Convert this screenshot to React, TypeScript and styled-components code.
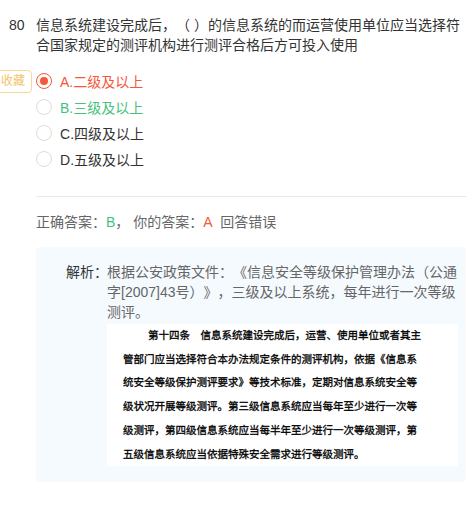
import styled, { createGlobalStyle } from 'styled-components';

const GlobalStyle = createGlobalStyle`
    body {
        margin: 0;
        background: #fff;
        font-family: "Liberation Sans", "Noto Sans CJK SC", sans-serif;
        color: #333;
        text-spacing-trim: space-all;
    }
`;

const Page = styled.div`
    width: 474px;
    padding: 15px 0 0 0;
    box-sizing: border-box;
`;

const Question = styled.div`
    display: flex;
    font-size: 14px;
    line-height: 20px;
    color: #333;
`;

const Num = styled.div`
    width: 36px;
    flex: none;
    padding-left: 9px;
    box-sizing: border-box;
`;

const Stem = styled.div`
    width: 430px;
`;

const Options = styled.div`
    position: relative;
    margin: 13px 0 0 36px;
    display: flex;
    flex-direction: column;
`;

const Collect = styled.div`
    position: absolute;
    left: -42px;
    top: 2px;
    height: 23px;
    padding: 0 6px;
    box-sizing: border-box;
    border: 1px solid #f9d795;
    border-radius: 4px;
    color: #f2c36a;
    font-size: 12px;
    line-height: 21px;
    background: #fff;
`;

const Option = styled.div<{ $tone?: string }>`
    display: flex;
    align-items: center;
    height: 26px;
    font-size: 14px;
    color: ${(p) => p.$tone || '#333'};
`;

const Radio = styled.span<{ $checked?: boolean }>`
    width: 16px;
    height: 16px;
    margin-right: 8px;
    border-radius: 50%;
    box-sizing: border-box;
    border: 1px solid ${(p) => (p.$checked ? '#f5573a' : '#dcdcdc')};
    display: flex;
    align-items: center;
    justify-content: center;
    &::after {
        content: '';
        display: ${(p) => (p.$checked ? 'block' : 'none')};
        width: 8px;
        height: 8px;
        border-radius: 50%;
        background: #f5573a;
    }
`;

const Divider = styled.div`
    margin: 24px 8px 0 36px;
    height: 1px;
    background: #e8e8e8;
`;

const Result = styled.div`
    margin: 15px 0 0 36px;
    font-size: 14px;
    line-height: 20px;
    color: #666;
`;

const Mark = styled.span<{ $tone: string }>`
    color: ${(p) => p.$tone};
`;

const Analysis = styled.div`
    margin: 15px 8px 0 36px;
    padding: 15px 5px 16px 30px;
    background: #f5fafe;
    border-radius: 4px;
    display: flex;
`;

const Label = styled.div`
    flex: none;
    width: 41px;
    white-space: nowrap;
    font-size: 14px;
    line-height: 20px;
    color: #333;
`;

const Body = styled.div`
    flex: 1;
    min-width: 0;
    font-size: 14px;
    line-height: 20px;
    color: #666;
`;

const Clip = styled.div`
    width: 351px;
    margin-top: 2px;
    padding: 0 0 0 16px;
    box-sizing: border-box;
    background: #fff;
    color: #000;
    font-size: 10.5px;
    font-weight: normal;
    -webkit-text-stroke: 0.3px #000;
    line-height: 23.7px;
    white-space: nowrap;
`;

const ClipLine = styled.div<{ $indent?: boolean }>`
    padding-left: ${(p) => (p.$indent ? '25px' : '0')};
`;

const clipLines = [
    '第十四条　信息系统建设完成后，运营、使用单位或者其主',
    '管部门应当选择符合本办法规定条件的测评机构，依据《信息系',
    '统安全等级保护测评要求》等技术标准，定期对信息系统安全等',
    '级状况开展等级测评。第三级信息系统应当每年至少进行一次等',
    '级测评，第四级信息系统应当每半年至少进行一次等级测评，第',
    '五级信息系统应当依据特殊安全需求进行等级测评。',
];

const options = [
    { key: 'A', text: '二级及以上', tone: '#f5573a', checked: true },
    { key: 'B', text: '三级及以上', tone: '#45c27e' },
    { key: 'C', text: '四级及以上' },
    { key: 'D', text: '五级及以上' },
];

export default function App() {
    return (
        <Page>
            <GlobalStyle />
            <Question>
                <Num>80</Num>
                <Stem>信息系统建设完成后，（ ）的信息系统的而运营使用单位应当选择符合国家规定的测评机构进行测评合格后方可投入使用</Stem>
            </Question>
            <Options>
                <Collect>收藏</Collect>
                {options.map((o) => (
                    <Option key={o.key} $tone={o.tone}>
                        <Radio $checked={o.checked} />
                        {o.key}.{o.text}
                    </Option>
                ))}
            </Options>
            <Divider />
            <Result>
                正确答案：<Mark $tone="#45c27e">B</Mark>， 你的答案：<Mark $tone="#f5573a">A</Mark>&nbsp; 回答错误
            </Result>
            <Analysis>
                <Label>解析：</Label>
                <Body>
                    根据公安政策文件：《信息安全等级保护管理办法（公通字[2007]43号）》，三级及以上系统，每年进行一次等级测评。
                    <Clip>
                        {clipLines.map((line, i) => (
                            <ClipLine key={i} $indent={i === 0}>{line}</ClipLine>
                        ))}
                    </Clip>
                </Body>
            </Analysis>
        </Page>
    );
}
